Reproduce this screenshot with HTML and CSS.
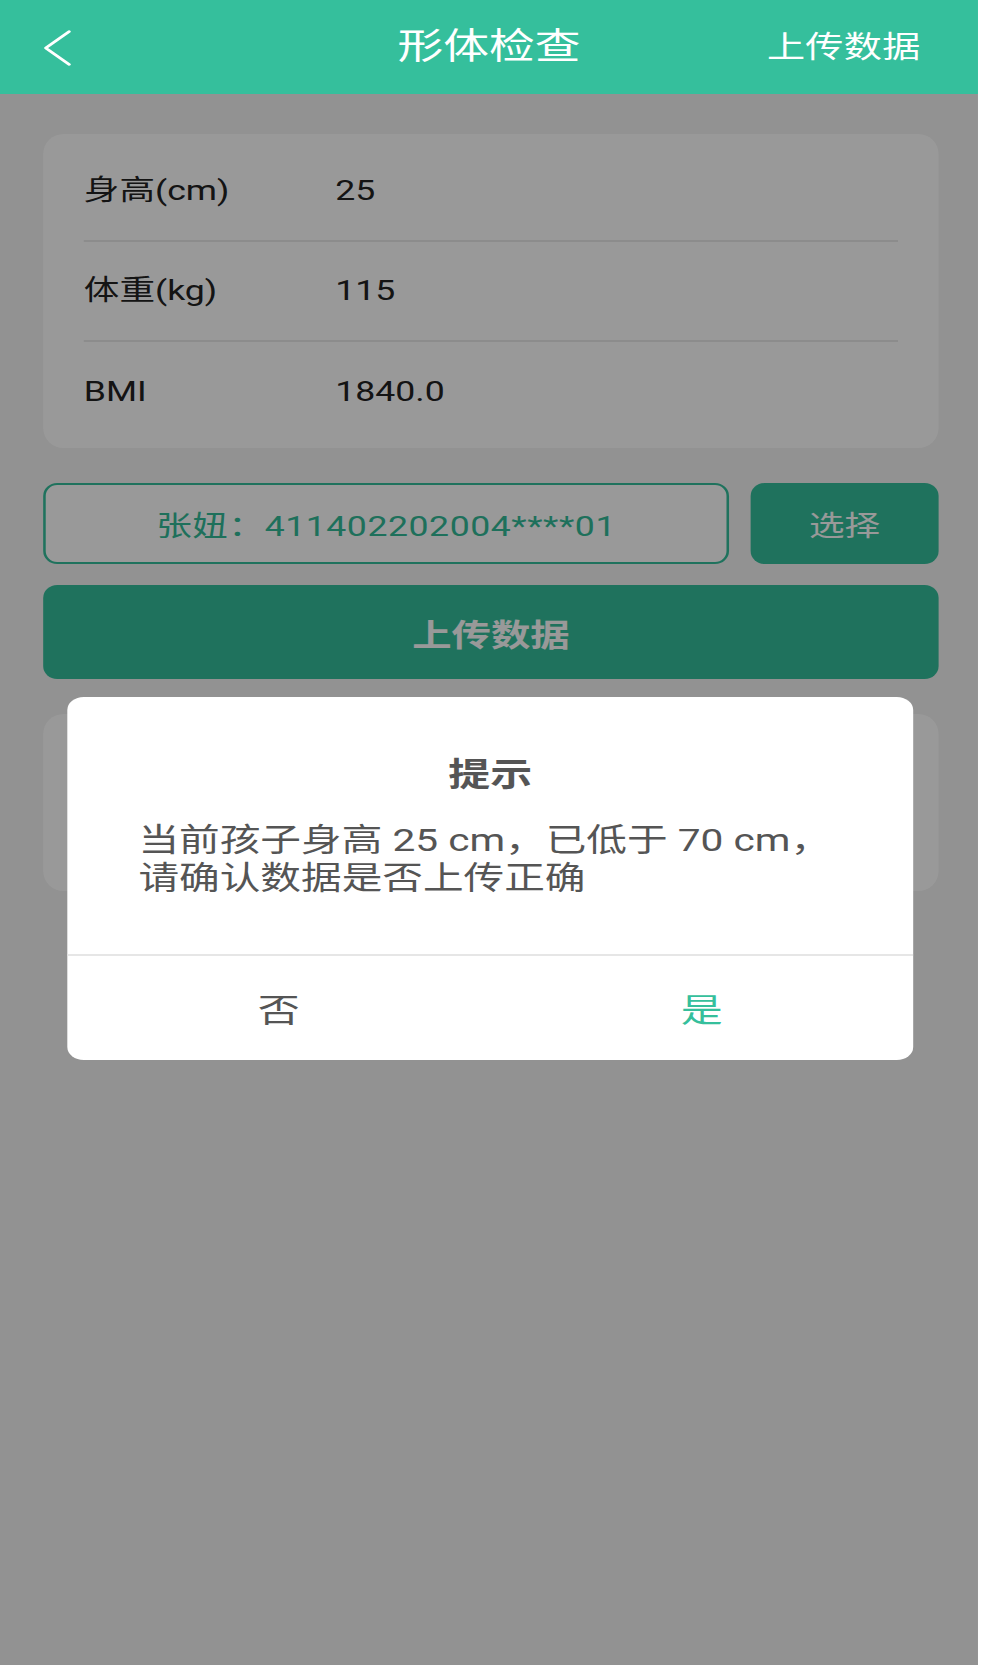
FILE: index.html
```html
<!DOCTYPE html>
<html lang="zh-CN">
<head>
<meta charset="utf-8">
<title>形体检查</title>
<link rel="stylesheet" href="styles.css">
</head>
<body>
<div class="screen">
  <header class="topbar">
    <div class="topbar-left">
      <svg class="back" viewBox="0 0 22 36" width="22" height="36" aria-hidden="true">
        <path d="M20.5 1.5 L2 18 L20.5 34.5" fill="none" stroke="#ffffff" stroke-width="2.4" stroke-linecap="round" stroke-linejoin="round"/>
      </svg>
    </div>
    <h1 class="topbar-title">形体检查</h1>
    <div class="topbar-right">上传数据</div>
  </header>

  <main class="content">
    <section class="card">
      <div class="row"><span class="label">身高(cm)</span><span class="value">25</span></div>
      <div class="row"><span class="label">体重(kg)</span><span class="value">115</span></div>
      <div class="row"><span class="label">BMI</span><span class="value">1840.0</span></div>
    </section>

    <div class="picker">
      <div class="picker-field">张妞：411402202004****01</div>
      <button class="picker-btn" type="button">选择</button>
    </div>

    <button class="upload-btn" type="button">上传数据</button>

    <section class="card card-empty"></section>
  </main>

  <div class="mask"></div>

  <div class="dialog">
    <div class="dialog-title">提示</div>
    <div class="dialog-body">当前孩子身高 25 cm，已低于 70 cm，<br>请确认数据是否上传正确</div>
    <div class="dialog-actions">
      <button class="dialog-btn dialog-no" type="button">否</button>
      <button class="dialog-btn dialog-yes" type="button">是</button>
    </div>
  </div>
</div>
</body>
</html>
```

FILE: styles.css
```css
html, body {
  margin: 0;
  padding: 0;
  background: #ffffff;
}

body {
  overflow: hidden;
  font-family: Roboto, "Noto Sans CJK SC", "Noto Sans", sans-serif;
}

/* The reference screen is stretched horizontally; lay it out at its
   native width and stretch it once, as the capture did. */
.screen {
  position: relative;
  width: 770px;
  min-height: 1665px;
  background: #f3f3f3;
  transform: scaleX(1.2701);
  transform-origin: 0 0;
}

.topbar {
  display: grid;
  grid-template-columns: 1fr auto 1fr;
  align-items: center;
  height: 94px;
  background: #35bf9c;
  color: #ffffff;
}

.topbar-left {
  padding-left: 34px;
  display: flex;
  align-items: center;
}

.back {
  display: block;
  margin-top: 1px;
}

.topbar-title {
  margin: 0;
  font-size: 36px;
  font-weight: 400;
  line-height: 1;
}

.topbar-right {
  justify-self: end;
  padding-right: 45px;
  font-size: 30px;
  line-height: 1;
  letter-spacing: 0.3px;
}

.content {
  display: flex;
  flex-direction: column;
  padding: 40px 31px 0 34px;
}

.card {
  background: #ffffff;
  border-radius: 16px / 20px;
  padding: 8px 32px 6px;
}

.row {
  display: flex;
  align-items: center;
  height: 100px;
  box-sizing: border-box;
  font-size: 28px;
  color: #222222;
  line-height: 1.2;
}

.row:not(:last-child) {
  border-bottom: 2px solid #e9e9e9;
}

.label {
  width: 198px;
  flex: none;
}

.card-empty {
  margin-top: 35px;
  height: 177px;
  padding: 0;
}

.picker {
  display: flex;
  gap: 17px;
  margin-top: 35px;
  height: 81px;
}

.picker-field {
  flex: 1;
  display: flex;
  align-items: center;
  justify-content: center;
  box-sizing: border-box;
  border: 2px solid #35bf9c;
  border-radius: 11px / 13px;
  background: #ffffff;
  color: #33bb98;
  font-size: 28px;
  letter-spacing: 0.45px;
}

.picker-btn {
  width: 148px;
  flex: none;
  border: 0;
  border-radius: 11px / 13px;
  background: #35bf9c;
  color: #ffffff;
  font-family: inherit;
  font-size: 28px;
  padding: 0;
}

.upload-btn {
  margin-top: 21px;
  height: 94px;
  border: 0;
  border-radius: 11px / 13px;
  background: #35bf9c;
  color: #ffffff;
  font-family: inherit;
  font-size: 31px;
  font-weight: 700;
  padding: 0;
}

.mask {
  position: absolute;
  top: 94px;
  left: 0;
  right: 0;
  bottom: 0;
  background: rgba(0, 0, 0, 0.4);
}

.dialog {
  position: absolute;
  top: 697px;
  left: 53px;
  width: 666px;
  background: #ffffff;
  border-radius: 13px;
  overflow: hidden;
}

.dialog-title {
  padding-top: 58px;
  height: 40px;
  line-height: 40px;
  text-align: center;
  font-size: 33px;
  font-weight: 700;
  color: #555555;
}

.dialog-body {
  margin-top: 26px;
  padding: 0 56px 57px;
  font-size: 32px;
  line-height: 38px;
  color: #555555;
  border-bottom: 2px solid #e6e6e6;
}

.dialog-actions {
  display: flex;
  height: 104px;
}

.dialog-btn {
  flex: 1;
  border: 0;
  background: transparent;
  font-family: inherit;
  font-size: 33px;
  padding: 0;
}

.dialog-no {
  color: #555555;
}

.dialog-yes {
  color: #35bf9c;
}
```
